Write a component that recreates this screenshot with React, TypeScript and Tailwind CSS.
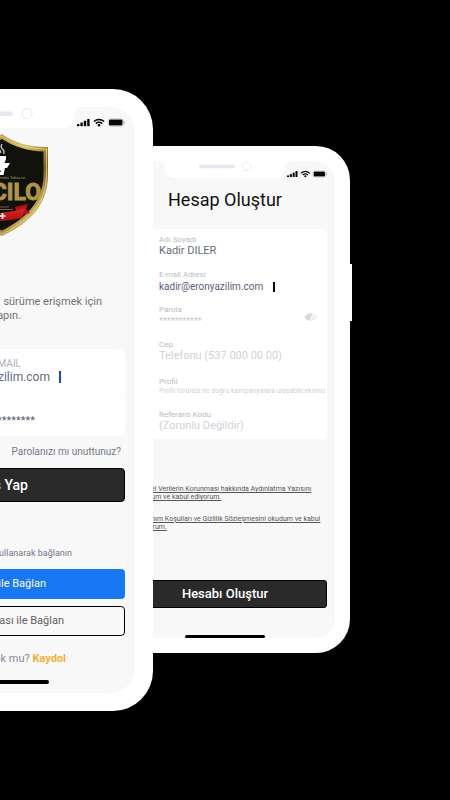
import type { ReactNode } from "react";

function Notch({ className }: { className: string }) {
  return (
    <svg viewBox="0 0 160 21" className={className} aria-hidden="true">
      <path
        d="M0 0H160C157 0 156 1 155.500 4L154.500 9Q153 21 141 21H19Q7 21 5.500 9L4.500 4C4 1 3 0 0 0Z"
        fill="#ffffff"
      />
      <rect x="48" y="4.500" width="45" height="4.500" rx="2" fill="#e4e8ef" />
      <circle cx="107" cy="6.500" r="5" fill="#fff" stroke="#e4e8f1" strokeWidth="1" />
    </svg>
  );
}

function StatusIcons({ className }: { className: string }) {
  return (
    <svg viewBox="0 0 48 9" className={className} role="img" aria-label="Sinyal, Wi-Fi, pil">
      <g fill="#080808">
        <rect x="0" y="6" width="2.400" height="2.200" rx="0.500" />
        <rect x="3.400" y="4.500" width="2.400" height="3.700" rx="0.500" />
        <rect x="6.800" y="2.800" width="2.400" height="5.400" rx="0.500" />
        <rect x="10.200" y="1" width="2.400" height="7.200" rx="0.500" />
        <circle cx="22" cy="7.200" r="1.300" />
        <rect x="32" y="1.500" width="13.500" height="6" rx="1" />
      </g>
      <g fill="none" stroke="#080808" strokeWidth="1.500">
        <path d="M16.800 3.500Q22-0.700 27.200 3.500" />
        <path d="M18.800 5.600Q22 3 25.200 5.600" />
      </g>
      <rect x="31.200" y="0.700" width="15.100" height="7.600" rx="2" fill="none" stroke="#bdbdbd" strokeWidth="0.700" />
      <path d="M47.300 3.200v2.600" stroke="#909090" strokeWidth="0.800" />
    </svg>
  );
}

function Logo() {
  return (
    <svg viewBox="-49 0 98 104" className="h-[104px] w-[98px]" role="img" aria-label="Logo">
      <defs>
        <linearGradient id="gold" x1="0" y1="0" x2="1" y2="1">
          <stop offset="0" stopColor="#8b6b24" />
          <stop offset="0.450" stopColor="#d7bd64" />
          <stop offset="0.650" stopColor="#806018" />
          <stop offset="0.850" stopColor="#e2cb76" />
          <stop offset="1" stopColor="#96772b" />
        </linearGradient>
        <linearGradient id="ribbon" x1="0" y1="0" x2="0" y2="1">
          <stop offset="0" stopColor="#e52425" />
          <stop offset="1" stopColor="#a90d13" />
        </linearGradient>
      </defs>
      <path
        d="M2 0C14 9 29 13 48 13V43C47 70 32 88 2 102C-28 88-45 70-46 43V13C-27 13-12 9 2 0Z"
        fill="url(#gold)"
      />
      <path
        d="M2 2C14 11 29 15 46.500 15V43C45 69 31 86 2 100C-27 86-43 69-44.500 43V15C-27 15-12 11 2 2Z"
        fill="none"
        stroke="#efdc93"
        strokeWidth="0.700"
      />
      <path
        d="M2 5C14 13 28 17 43.500 17.500V43C42 66 29 83 2 96.500C-25 83-40 66-41.500 43V17.500C-26 17-12 13 2 5Z"
        fill="#12120c"
      />
      <path d="M-7 22H6V25L4.500 29H10L7 34H5L3.500 41H-6V38H1L0 36H-6Z" fill="#fff" />
      <path d="M2 10Q0 13 2.500 15T3.500 20M-2 13Q0 16 1 19" fill="none" stroke="#ddd" strokeWidth="1.200" />
      <text x="25" y="45" textAnchor="end" fontSize="4" fill="#a89960" fontFamily="Liberation Sans, sans-serif">
        Smoke Tobacco
      </text>
      <text
        x="41"
        y="66"
        textAnchor="end"
        fontSize="23"
        fontWeight="700"
        fill="#ad9546"
        stroke="#ad9546"
        strokeWidth="0.900"
        fontFamily="Roboto, sans-serif"
      >
        CILO
      </text>
      <path d="M-3 73H9M-2 75.500H13" stroke="#776a40" strokeWidth="0.900" />
      <path d="M15 73L28 70 26 75 30 79 18 82Z" fill="#b51018" />
      <path d="M-23 78Q2 82 25 74L22 84Q2 89-22 86Z" fill="url(#ribbon)" />
      <path d="M2.500 79V85M-0.500 82H5.500" stroke="#fff" strokeWidth="1.700" />
    </svg>
  );
}

function EyeOff() {
  return (
    <svg viewBox="0 0 14 10" className="h-[10px] w-[13px]" aria-hidden="true">
      <path d="M0.500 5.200Q3.500 0.800 9.500 0.800L6 9.300Q2.500 8.500 0.500 5.200Z" fill="#d6d9df" />
      <path d="M10 2Q12 3 13.300 5Q11.300 8.200 7.500 8.700M9.600 4Q11.300 5.200 8.300 7" fill="none" stroke="#d6d9df" strokeWidth="1" />
    </svg>
  );
}

interface FieldProps {
  id: string;
  label: string;
  value?: string;
  placeholder?: string;
  rowClass: string;
  inputClass: string;
  caret?: boolean;
  action?: ReactNode;
}

function Field({ id, label, value, placeholder, rowClass, inputClass, caret, action }: FieldProps) {
  return (
    <div className={rowClass}>
      <div className="flex items-center">
        <div className="min-w-0 grow">
          <label htmlFor={id} className="block text-[8px] leading-[10px] text-[#b7bbc3]">
            {label}
          </label>
          <div className="flex items-center">
            <input
              id={id}
              defaultValue={value}
              placeholder={placeholder}
              className={`min-w-0 bg-transparent outline-none placeholder:text-[#cfd2d8] ${inputClass}`}
            />
            {caret && <span className="h-[10px] w-[2px] bg-black" />}
          </div>
        </div>
        {action}
      </div>
    </div>
  );
}

function LoginPhone() {
  return (
    <section className="relative z-10 -ml-[153px] mt-[89px] w-[306px] shrink-0 rounded-[40px] bg-white p-[18px]">
      <div className="rounded-[25px] bg-[#f8f8f8] px-[10px] pb-[9px]">
        <header className="relative flex h-[27px] justify-end pt-[11px]">
          <Notch className="absolute left-1/2 top-0 h-[21px] w-[160px] -translate-x-1/2" />
          <StatusIcons className="h-[9px] w-[48px]" />
        </header>
        <div className="flex justify-center">
          <Logo />
        </div>
        <p className="mt-[57px] text-right text-[11px] leading-[14px] text-[#727272]">
          <span className="block pr-[23px]">sürüme erişmek için</span>
          <span className="block pr-[104px]">yapın.</span>
        </p>
        <div className="mt-[26px] h-[87px] rounded-[7px] bg-white">
          <div className="h-[45px] border-b border-[#fbfbfb] pt-[9px]">
            <label htmlFor="login-mail" className="block pr-[104px] text-right text-[10px] leading-[12px] text-[#adb1b8]">
              E-MAIL
            </label>
            <div className="flex items-center justify-end pr-[64px]">
              <input
                id="login-mail"
                defaultValue="kadir@eronyazilim.com"
                className="mr-[9px] h-[14px] w-[150px] bg-transparent text-right text-[12px] text-[#646c7d] outline-none"
              />
              <span className="h-[12px] w-[2px] bg-[#1748c7]" />
            </div>
          </div>
          <div className="pr-[90px] pt-[20px]">
            <input
              aria-label="Parola"
              defaultValue="***********"
              className="block h-[14px] w-full bg-transparent text-right text-[11px] text-[#596174] outline-none"
            />
          </div>
        </div>
        <a href="#parola" className="mt-[9px] block pr-[4px] text-right text-[10px] leading-[14px] text-[#737987]">
          Parolanızı mı unuttunuz?
        </a>
        <button className="mt-[9px] block h-[34px] w-full rounded-[4px] border border-black bg-[#2a2a2a] text-[14px] font-medium text-white">
          Giriş Yap
        </button>
        <p className="mt-[44px] pr-[53px] text-right text-[9px] leading-[14px] text-[#737987]">
          kullanarak bağlanın
        </p>
        <button className="mt-[9px] block h-[30px] w-full rounded-[4px] bg-[#1877f2] pr-[79px] text-right text-[11px] text-white">
          Facebook ile Bağlan
        </button>
        <button className="mt-[7px] block h-[30px] w-full rounded-[4px] border border-black bg-[#f9f9f9] pr-[60px] text-right text-[11px] text-[#5f5f5f]">
          Telefon Numarası ile Bağlan
        </button>
        <p className="mt-[16px] pr-[59px] text-right text-[11px] leading-[14px] text-[#858a96]">
          Hesabın yok mu?{" "}
          <a href="#kaydol" className="font-bold text-[#efb336]">
            Kaydol
          </a>
        </p>
        <div className="mx-auto mt-[14px] h-[4px] w-[98px] rounded-full bg-black" />
      </div>
    </section>
  );
}

function SignUpPhone() {
  return (
    <section className="relative -ml-[53px] mt-[146px] w-[250px] shrink-0 rounded-[34px] bg-white p-[15px]">
      <span className="absolute -right-[2px] top-[118px] h-[57px] w-[2px] bg-white" />
      <div className="rounded-[20px] bg-[#f8f8f8] px-[8px]">
        <header className="relative flex h-[28px] justify-end pt-[9px]">
          <Notch className="absolute left-1/2 top-0 h-[17px] w-[130px] -translate-x-1/2" />
          <StatusIcons className="h-[8px] w-[40px]" />
        </header>
        <h1 className="text-center text-[18px] leading-[22px] text-[#111111]">Hesap Oluştur</h1>
        <form className="mt-[18px] rounded-[6px] bg-white pl-[36px] pr-[2px] pt-[6px]">
          <Field id="name" label="Adı Soyadı" value="Kadir DİLER" rowClass="h-[35px]" inputClass="h-[13px] w-full text-[11px] text-[#646c7d]" />
          <Field id="mail" label="E-mail Adresi" value="kadir@eronyazilim.com" rowClass="h-[35px]" inputClass="h-[13px] w-[114px] text-[10px] text-[#596174]" caret />
          <Field
            id="password"
            label="Parola"
            value="***********"
            rowClass="h-[35px]"
            inputClass="h-[13px] w-full text-[9px] text-[#c4c7ce]"
            action={
              <button type="button" aria-label="Parolayı göster" className="mr-[8px]">
                <EyeOff />
              </button>
            }
          />
          <Field id="phone" label="Cep" placeholder="Telefonu (537 000 00 00)" rowClass="h-[37px]" inputClass="h-[13px] w-full text-[11px]" />
          <Field id="profile" label="Profil" placeholder="Profil türünüz ile doğru kampanyalara ulaşabilceksiniz" rowClass="h-[33px]" inputClass="h-[8px] w-full text-[7px]" />
          <Field id="reference" label="Referans Kodu" placeholder="(Zorunlu Değildir)" rowClass="h-[29px]" inputClass="h-[13px] w-full text-[11px]" />
        </form>
        <div className="mt-[46px] pl-[13px] text-[7px] leading-[8px] text-[#555555]">
          <a href="#kvkk" className="block underline">
            Kişisel Verilerin Korunması hakkında Aydınlatma Yazısını
            <br />
            okudum ve kabul ediyorum.
          </a>
          <a href="#kosullar" className="mt-[14px] block underline">
            Kullanım Koşulları ve Gizlilik Sözleşmesini okudum ve kabul
            <br />
            ediyorum.
          </a>
        </div>
        <button className="mt-[49px] block h-[28px] w-full rounded-[3px] border border-black bg-[#2a2a2a] text-[13px] font-medium text-white">
          Hesabı Oluştur
        </button>
        <div className="mx-auto mt-[27px] h-[3px] w-[80px] rounded-full bg-black" />
      </div>
    </section>
  );
}

export default function App() {
  return (
    <main className="flex min-h-screen items-start overflow-hidden bg-black font-[Roboto,'Noto_Sans',sans-serif]">
      <LoginPhone />
      <SignUpPhone />
    </main>
  );
}
